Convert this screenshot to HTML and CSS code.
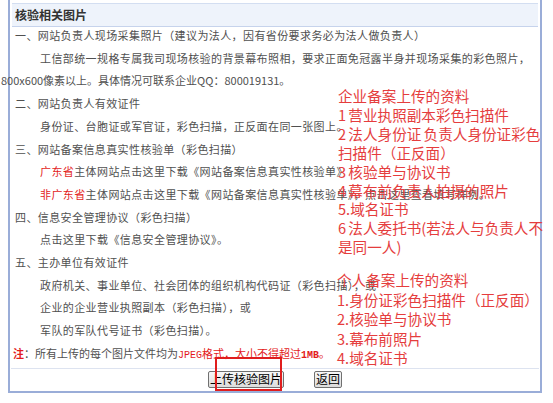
FILE: index.html
```html
<!DOCTYPE html>
<html lang="zh-CN">
<head>
    <meta charset="UTF-8">
    <title>核验相关图片</title>
    <link rel="stylesheet" href="styles.css">
</head>
<body>
    <div class="panel">
        <div class="panel-head">核验相关图片</div>
        <div class="panel-body">
            <p class="item">一、网站负责人现场采集照片（建议为法人，因有省份要求务必为法人做负责人）</p>
            <p class="sub">工信部统一规格专属我司现场核验的背景幕布照相，要求正面免冠露半身并现场采集的彩色照片，</p>
            <p class="wrap">800x600像素以上。具体情况可联系企业QQ：800019131。</p>
            <p class="item">二、网站负责人有效证件</p>
            <p class="sub">身份证、台胞证或军官证，彩色扫描，正反面在同一张图上。</p>
            <p class="item">三、网站备案信息真实性核验单（彩色扫描）</p>
            <p class="sub"><span class="red">广东省</span>主体网站点击这里下载《网站备案信息真实性核验单》</p>
            <p class="sub"><span class="red">非广东省</span>主体网站点击这里下载《网站备案信息真实性核验单》，点击这里查看填写样例。</p>
            <p class="item">四、信息安全管理协议（彩色扫描）</p>
            <p class="sub">点击这里下载《信息安全管理协议》。</p>
            <p class="item">五、主办单位有效证件</p>
            <p class="sub">政府机关、事业单位、社会团体的组织机构代码证（彩色扫描），或</p>
            <p class="sub">企业的企业营业执照副本（彩色扫描），或</p>
            <p class="sub">军队的军队代号证书（彩色扫描）。</p>
            <p class="note"><span class="red bold">注</span>：所有上传的每个图片文件均为<span class="red"><span class="mono">JPEG</span>格式，大小不得超过<b>1MB</b>。</span></p>
        </div>
        <div class="actions">
            <button>上传核验图片</button>
            <button>返回</button>
        </div>
    </div>

    <!-- hand-drawn notes laid over the screenshot -->
    <div class="mark mark-company">
        企业备案上传的资料<br>
        1 营业执照副本彩色扫描件<br>
        2 法人身份证 负责人身份证彩色<br>
        扫描件（正反面）<br>
        3 核验单与协议书<br>
        4 幕布前负责人拍摄的照片<br>
        5.域名证书<br>
        6 法人委托书(若法人与负责人不<br>
        是同一人)
    </div>
    <div class="mark mark-person">
        个人备案上传的资料<br>
        1.身份证彩色扫描件（正反面）<br>
        2.核验单与协议书<br>
        3.幕布前照片<br>
        4.域名证书
    </div>
    <div class="box-mark"></div>
</body>
</html>
```

FILE: styles.css
```css
body {
    margin: 0;
    background: #fff;
    font-family: "Noto Sans CJK SC", "Liberation Sans", sans-serif;
    font-size: 11px;
    color: #505050;
    position: relative;
    height: 403px;
    overflow: hidden;
}
.panel {
    width: 526px;
    margin: -6px 0 0 8px;
    padding: 7px 2px 0;
    border: 2px solid #9aadd8;
    background: #fff;
}
.panel-head {
    height: 22px;
    line-height: 22px;
    padding-left: 3px;
    background: #eef3fb;
    border-top: 1px solid #d3def1;
    border-bottom: 1px solid #c6d3ec;
    font-size: 12px;
    font-weight: bold;
    color: #333;
}
.panel-body {
    margin-top: -3px;
    padding: 0 1px;
}
.panel-body p {
    margin: 0;
    line-height: 22.7px;
    letter-spacing: 0.4px;
    white-space: nowrap;
}
.item {
    padding-left: 2px;
}
.sub {
    padding-left: 27px;
}
.wrap {
    margin-left: -12px !important;
    letter-spacing: 0 !important;
}
.red {
    color: #e31b1b;
}
.bold {
    font-weight: bold;
}
.mono {
    font-family: "Liberation Mono", monospace;
    font-size: 10px;
    letter-spacing: 0;
}
.note {
    letter-spacing: 0 !important;
}
.note b {
    font-family: "Liberation Mono", monospace;
    font-size: 10px;
}
.actions {
    display: flex;
    justify-content: center;
    gap: 30px;
    margin: 0 -1px;
    padding: 2px 0 3px;
    border-top: 1px solid #dde3f0;
}
button {
    height: 17px;
    padding: 0 1px;
    font-family: "Noto Sans CJK SC", sans-serif;
    font-size: 12px;
    line-height: 14px;
    color: #000;
    background: linear-gradient(#f8f8f8, #dcdcdc);
    border: 1px solid #707070;
    border-radius: 2px;
}
.mark {
    position: absolute;
    font-size: 14.6px;
    color: #e53d3d;
    white-space: nowrap;
    word-spacing: -1px;
}
.mark-company {
    left: 338px;
    top: 87px;
    line-height: 18.9px;
}
.mark-person {
    left: 337px;
    top: 270px;
    line-height: 19.5px;
}
.box-mark {
    position: absolute;
    left: 215px;
    top: 357px;
    width: 63px;
    height: 30px;
    border: 2px solid #e01d1d;
}
```
